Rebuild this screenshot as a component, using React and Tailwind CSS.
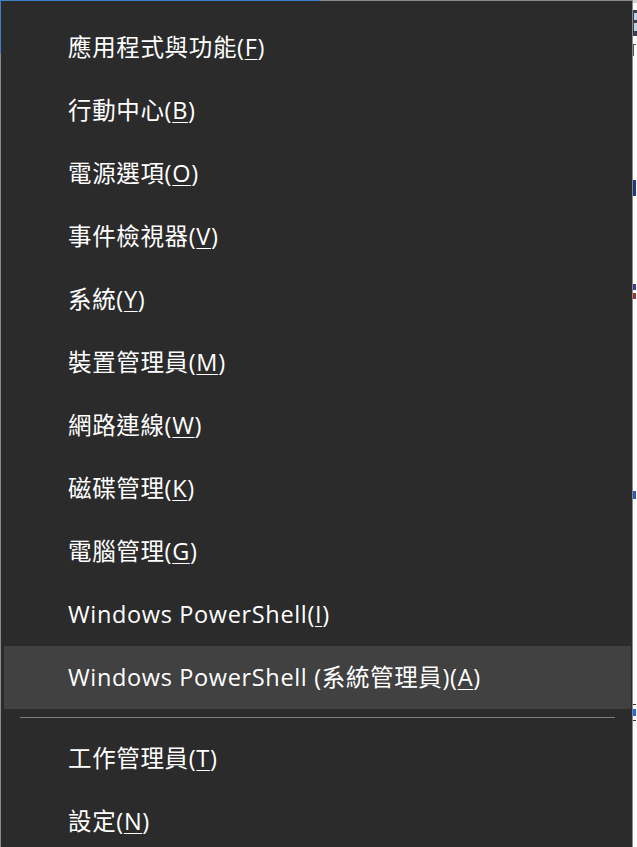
const ITEMS = [
  { label: '應用程式與功能(', key: 'F' },
  { label: '行動中心(', key: 'B' },
  { label: '電源選項(', key: 'O' },
  { label: '事件檢視器(', key: 'V' },
  { label: '系統(', key: 'Y' },
  { label: '裝置管理員(', key: 'M' },
  { label: '網路連線(', key: 'W' },
  { label: '磁碟管理(', key: 'K' },
  { label: '電腦管理(', key: 'G' },
  { label: 'Windows PowerShell(', key: 'I' },
  { label: 'Windows PowerShell (系統管理員)(', key: 'A', hover: true },
]

const ITEMS_BOTTOM = [
  { label: '工作管理員(', key: 'T' },
  { label: '設定(', key: 'N' },
]

function MenuItem({ item }) {
  return (
    <div
      className={`h-[63px] shrink-0 flex items-center pl-[64px] text-[23.5px] tracking-[0.65px] text-white ${
        item.hover ? 'bg-[#414141]' : ''
      }`}
    >
      <span className="whitespace-nowrap">
        {item.label}
        <span className="underline underline-offset-[3px] decoration-1">{item.key}</span>)
      </span>
    </div>
  )
}

export default function App() {
  return (
    <div
      className="w-[637px] h-[847px] overflow-hidden flex bg-[#fbfbfb]"
      style={{ fontFamily: '"Open Sans", "Noto Sans CJK TC", sans-serif' }}
    >
      {/* Menu */}
      <div className="w-[633px] h-full flex flex-col bg-[#2b2b2b] border-r border-[#8a8a8a]">
        {/* top edge */}
        <div className="h-px flex shrink-0">
          <div className="w-[320px] bg-[#3d7fc9]" />
          <div className="flex-1 bg-[#8a8a8a]" />
        </div>
        <div className="flex flex-1 min-h-0">
          {/* left edge */}
          <div className="w-px flex flex-col shrink-0">
            <div className="h-[53px] bg-[#3d7fc9]" />
            <div className="flex-1 bg-[#8a8a8a]" />
          </div>
          <div className="flex-1 flex flex-col pt-[15px] pl-[3px] pr-[1px] min-w-0">
            {ITEMS.map((it) => (
              <MenuItem key={it.key} item={it} />
            ))}
            <div className="shrink-0 pt-[8px] pb-[9px] px-[16px]">
              <div className="h-px bg-[#7f7f7f]" />
            </div>
            {ITEMS_BOTTOM.map((it) => (
              <MenuItem key={it.key} item={it} />
            ))}
          </div>
        </div>
      </div>

      {/* Window behind, peeking out */}
      <div className="flex-1 flex flex-col">
        <div className="h-[3px] shrink-0 bg-[#d0d0d0]" />
        <div className="mt-[7px] h-[26px] shrink-0 bg-[#3a3f4a] flex flex-col gap-[3px] py-[3px] pl-px">
          <div className="h-[7px] bg-[#bcd3ea]" />
          <div className="h-[8px] bg-[#bcd3ea]" />
        </div>
        <div className="mt-[8px] h-[12px] shrink-0 w-[3px] border-t border-l border-[#555]" />
        <div className="mt-[124px] h-[16px] shrink-0 w-[3px] bg-[#1e3a78]" />
        <div className="mt-[88px] h-[20px] shrink-0 w-[3px] flex flex-col gap-[3px]">
          <div className="h-[6px] bg-[#4a3a8a]" />
          <div className="h-[6px] bg-[#8a3a3a]" />
        </div>
        <div className="mt-[187px] h-[8px] shrink-0 w-[3px] bg-[#2a5ab0]" />
        <div className="mt-[205px] h-[18px] shrink-0 w-[3px] flex flex-col gap-[4px]">
          <div className="h-px bg-[#333]" />
          <div className="h-[7px] bg-[#2a6ad0]" />
          <div className="h-px bg-[#333]" />
        </div>
      </div>
    </div>
  )
}
